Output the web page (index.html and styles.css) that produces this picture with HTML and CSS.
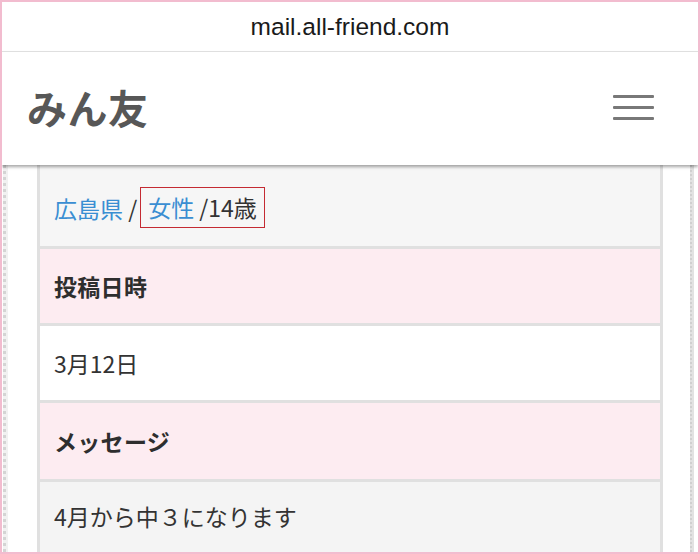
FILE: index.html
```html
<!DOCTYPE html>
<html lang="ja">
<head>
<meta charset="utf-8">
<title>みん友</title>
<link rel="stylesheet" href="styles.css">
</head>
<body>
<div class="frame">
  <div class="urlbar">mail.all-friend.com</div>
  <header class="header">
    <div class="logo">みん友</div>
    <div class="burger"><span></span><span></span><span></span></div>
  </header>
  <main class="content">
    <div class="rail-left"></div>
    <div class="table">
      <div class="row row-first">
        <a class="link" href="#">広島県</a>&nbsp;/<span class="mark"><a class="link" href="#">女性</a> /14歳</span>
      </div>
      <div class="row row-pink row-head">投稿日時</div>
      <div class="row row-white">3月12日</div>
      <div class="row row-pink row-head row-tall">メッセージ</div>
      <div class="row row-last">4月から中３になります</div>
    </div>
    <div class="rail-right"></div>
  </main>
</div>
</body>
</html>
```

FILE: styles.css
```css
* { box-sizing: border-box; }
html, body { margin: 0; padding: 0; }
body {
  width: 700px;
  height: 554px;
  background: #fff;
  font-family: "Noto Sans CJK JP", "Noto Sans", sans-serif;
  color: #333;
  overflow: hidden;
}
.frame {
  width: 700px;
  height: 554px;
  border: 2px solid #f2bccf;
  display: flex;
  flex-direction: column;
  overflow: hidden;
}
.urlbar {
  height: 50px;
  flex: none;
  display: flex;
  align-items: center;
  justify-content: center;
  font-family: "Liberation Sans", Arial, sans-serif;
  font-size: 24.5px;
  color: #1a1a1a;
  border-bottom: 1px solid #e3e3e3;
  padding-top: 1px;
}
.header {
  height: 113px;
  flex: none;
  display: flex;
  align-items: center;
  justify-content: space-between;
  padding: 0 44px 0 25px;
  background: #fff;
  box-shadow: 0 2px 3px rgba(0, 0, 0, 0.35);
  position: relative;
  z-index: 2;
}
.logo {
  font-size: 40px;
  font-weight: 700;
  color: #575757;
  letter-spacing: 0.5px;
  padding-bottom: 4px;
}
.burger {
  width: 41px;
  display: flex;
  flex-direction: column;
  gap: 8px;
  margin-top: -2px;
}
.burger span {
  display: block;
  height: 3px;
  background: #787878;
  border-radius: 1px;
}
.content {
  flex: 1;
  display: flex;
  min-height: 0;
}
.rail-left {
  width: 5px;
  margin-left: 1px;
  flex: none;
  background: #f1f1f1;
  border-left: 3px dotted #d4d4d4;
}
.table {
  width: 626px;
  margin-left: 29px;
  flex: none;
  border-left: 3px solid #e0e0e0;
  border-right: 3px solid #e0e0e0;
  display: flex;
  flex-direction: column;
}
.rail-right {
  width: 4px;
  margin-left: 27px;
  flex: none;
  background: #e2e2e2;
  border-left: 2px dotted #d0d0d0;
}
.row {
  flex: none;
  display: flex;
  align-items: center;
  padding-left: 14px;
  font-size: 23px;
  color: #333;
  border-bottom: 3px solid #e0e0e0;
  height: 77px;
  white-space: nowrap;
}
.row-first {
  height: 84px;
  background: #f6f6f6;
  padding-top: 4px;
}
.row-pink { background: #fdecf1; }
.row-white { background: #fff; }
.row-tall { height: 79px; }
.row-head { font-weight: 700; color: #2e2e2e; letter-spacing: 0.3px; }
.row-last {
  flex: 1;
  height: auto;
  background: #f4f4f4;
  border-bottom: none;
  align-items: flex-start;
  padding-top: 17px;
}
.link {
  color: #3a8ed2;
  text-decoration: none;
}
.mark {
  display: inline-block;
  border: 1px solid #c42a32;
  padding: 2px 7px 3px 7px;
  margin-left: 3px;
}
```
